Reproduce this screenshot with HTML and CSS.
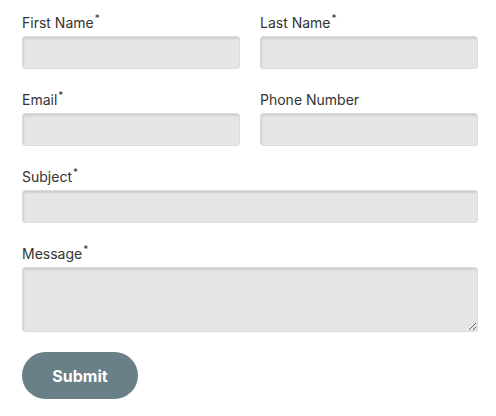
FILE: index.html
```html
<!DOCTYPE html>
<html lang="en">
<head>
<meta charset="utf-8">
<link rel="stylesheet" href="styles.css">
</head>
<body>
<form class="form">
  <div class="grid">
    <div class="field">
      <label class="label">First Name<sup class="req">*</sup></label>
      <input class="input" type="text">
    </div>
    <div class="field">
      <label class="label">Last Name<sup class="req">*</sup></label>
      <input class="input" type="text">
    </div>
    <div class="field">
      <label class="label">Email<sup class="req">*</sup></label>
      <input class="input" type="text">
    </div>
    <div class="field">
      <label class="label">Phone Number</label>
      <input class="input" type="text">
    </div>
    <div class="field full">
      <label class="label">Subject<sup class="req">*</sup></label>
      <input class="input" type="text">
    </div>
    <div class="field full">
      <label class="label">Message<sup class="req">*</sup></label>
      <textarea class="input textarea"></textarea>
    </div>
  </div>
  <button class="submit" type="button">Submit</button>
</form>
</body>
</html>
```
FILE: styles.css
```css
html, body {
  margin: 0;
  padding: 0;
  background: #ffffff;
}
body {
  font-family: Inter, "Liberation Sans", sans-serif;
  color: #333333;
}
.form {
  padding: 12px 18px 0 22px;
  display: flex;
  flex-direction: column;
  align-items: flex-start;
  gap: 20px;
}
.grid {
  width: 100%;
  display: grid;
  grid-template-columns: 1fr 1fr;
  column-gap: 20px;
  row-gap: 20px;
}
.field {
  display: flex;
  flex-direction: column;
  gap: 2px;
}
.full {
  grid-column: 1 / -1;
}
.label {
  font-size: 14px;
  line-height: 22px;
  color: #333333;
}
.req {
  font-size: 10px;
  line-height: 0;
  vertical-align: 6px;
  margin-left: 1px;
}
.input {
  box-sizing: border-box;
  height: 33px;
  width: 100%;
  margin: 0;
  background: #e6e6e6;
  border: 1px solid #dcdcdc;
  border-radius: 3px;
  box-shadow: inset 1px 2px 2px rgba(0, 0, 0, 0.1);
  font: inherit;
  padding: 4px 8px;
}
.textarea {
  height: 65px;
  display: block;
  resize: vertical;
}
.submit {
  width: 116px;
  height: 47px;
  border: none;
  border-radius: 24px;
  background: #6a8089;
  color: #ffffff;
  font-family: Inter, "Liberation Sans", sans-serif;
  font-weight: 700;
  font-size: 16px;
  padding: 0;
}
```
